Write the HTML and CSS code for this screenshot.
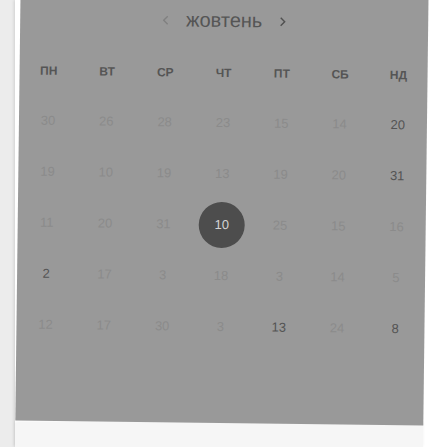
FILE: index.html
```html
<!DOCTYPE html>
<html lang="uk">
<head>
<meta charset="utf-8">
<link rel="stylesheet" href="styles.css">
</head>
<body>
<div class="sheet">
  <div class="panel">
    <div class="title">
      <svg class="chev prev" width="7" height="10" viewBox="0 0 7 10"><path d="M5.5 1 L1.5 5 L5.5 9" fill="none" stroke="currentColor" stroke-width="1.4"/></svg>
      <span class="month">жовтень</span>
      <svg class="chev next" width="7" height="10" viewBox="0 0 7 10"><path d="M1.5 1 L5.5 5 L1.5 9" fill="none" stroke="currentColor" stroke-width="1.4"/></svg>
    </div>
    <div class="weekdays">
      <span>ПН</span><span>ВТ</span><span>СР</span><span>ЧТ</span><span>ПТ</span><span>СБ</span><span>НД</span>
    </div>
    <div class="days">
      <span>30</span><span>26</span><span>28</span><span>23</span><span>15</span><span>14</span><span class="on">20</span>
      <span>19</span><span>10</span><span>19</span><span>13</span><span>19</span><span>20</span><span class="on">31</span>
      <span>11</span><span>20</span><span>31</span><span class="sel"><b>10</b></span><span>25</span><span>15</span><span>16</span>
      <span class="on">2</span><span>17</span><span>3</span><span>18</span><span>3</span><span>14</span><span>5</span>
      <span>12</span><span>17</span><span>30</span><span>3</span><span class="on">13</span><span>24</span><span class="on">8</span>
    </div>
  </div>
  <div class="footer"></div>
</div>
</body>
</html>
```
FILE: styles.css
```css
html, body {
  margin: 0;
  padding: 0;
  height: 100%;
  overflow: hidden;
}
body {
  background: #ececec;
  font-family: "Liberation Sans", Arial, sans-serif;
}
.sheet {
  margin-left: 15px;
  height: 100%;
  background: #ffffff;
  box-shadow: -1px 0 3px rgba(0,0,0,0.12);
  display: flex;
  flex-direction: column;
}
.panel {
  box-sizing: border-box;
  margin-left: 3px;
  margin-top: -20px;
  padding-top: 20px;
  width: 408px;
  height: 443px;
  flex: none;
  background: #999999;
  transform: rotate(0.7deg);
  display: flex;
  flex-direction: column;
}
.title {
  height: 42px;
  display: flex;
  align-items: center;
  justify-content: center;
  gap: 17px;
  color: #555;
}
.month {
  font-size: 20px;
  color: #555;
  line-height: 1;
  padding-bottom: 2px;
}
.chev.prev { color: #808080; }
.chev.next { color: #505050; }
.weekdays {
  margin-top: 8px;
  height: 46px;
  display: grid;
  grid-template-columns: repeat(7, 1fr);
  align-items: center;
  justify-items: center;
  font-size: 12px;
  font-weight: bold;
  color: #555;
}
.days {
  margin-top: 1px;
  display: grid;
  grid-template-columns: repeat(7, 1fr);
  grid-auto-rows: 51px;
  align-items: center;
  justify-items: center;
  font-size: 13px;
  color: #8b8b8b;
}
.days .on { color: #545454; }
.days .sel {
  width: 46px;
  height: 46px;
  border-radius: 50%;
  background: #4d4d4d;
  color: #d2d2d2;
  display: flex;
  align-items: center;
  justify-content: center;
}
.days .sel b { font-weight: normal; }
.footer {
  flex: 1;
  width: 408px;
  background: #f6f6f6;
  box-shadow: 0 -1px 3px rgba(0,0,0,0.06);
}
```
